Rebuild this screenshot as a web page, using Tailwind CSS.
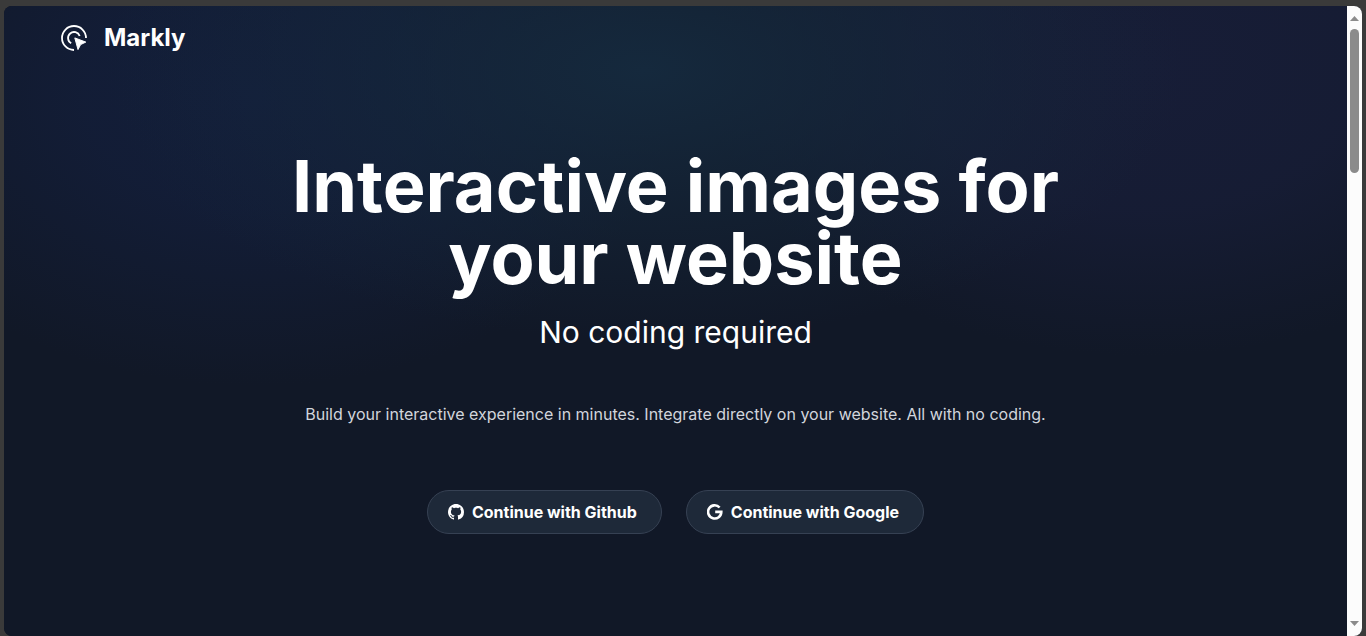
<!DOCTYPE html>
<html lang="en">
<head>
<meta charset="utf-8">
<meta name="viewport" content="width=device-width, initial-scale=1">
<title>Markly</title>
<script src="https://cdn.jsdelivr.net/npm/@tailwindcss/browser@4"></script>
</head>
<body class="min-h-screen bg-[#3a3a3a] px-1 pt-1.5 flex flex-col font-['Inter',sans-serif] text-white">
<div class="flex grow overflow-hidden rounded-lg bg-gray-900">
  <div class="flex grow flex-col bg-[#111827] bg-[radial-gradient(ellipse_540px_270px_at_640px_64px,#15293d_0%,#15293d99_40%,#15293d00_100%),radial-gradient(ellipse_440px_290px_at_1140px_60px,#171d37_0%,#171d37cc_50%,#171d3700_100%),radial-gradient(ellipse_420px_290px_at_250px_90px,#131e3a_0%,#131e3acc_40%,#131e3a00_100%)]">
    <header class="px-14 py-3">
      <a href="#" class="inline-flex items-center gap-4 text-2xl leading-10 font-bold">
        <svg class="size-7" viewBox="0 0 28 28" fill="none" stroke="currentColor" stroke-width="1.8" aria-hidden="true">
          <path d="M14 26A12 12 0 1 1 26 14"/>
          <path d="M11.2 19.3A6 6 0 1 1 19.7 12"/>
          <path d="M14.8 13.9L25.8 18.1L20.6 20.6L18 25.6Z" fill="currentColor" stroke-width="1" stroke-linejoin="round"/>
        </svg>
        Markly
      </a>
    </header>
    <main class="flex flex-col items-center px-6 pt-20 text-center">
      <h1 class="max-w-4xl text-7xl leading-none font-bold">Interactive images for<br>your website</h1>
      <p class="mt-4 text-3xl leading-11">No coding required</p>
      <p class="mt-12 text-base text-gray-300">Build your interactive experience in minutes. Integrate directly on your website. All with no coding.</p>
      <div class="mt-16 flex flex-wrap justify-center gap-6">
        <button type="button" class="flex h-11 items-center gap-2 rounded-full border border-gray-700 bg-gray-800 pr-6 pl-5 font-bold">
          <svg class="size-4" viewBox="0 0 16 16" fill="currentColor" aria-hidden="true"><path d="M8 0C3.58 0 0 3.58 0 8c0 3.54 2.29 6.53 5.47 7.59.4.07.55-.17.55-.38 0-.19-.01-.82-.01-1.49-2.01.37-2.53-.49-2.69-.94-.09-.23-.48-.94-.82-1.13-.28-.15-.68-.52-.01-.53.63-.01 1.08.58 1.23.82.72 1.21 1.87.87 2.33.66.07-.52.28-.87.51-1.07-1.78-.2-3.64-.89-3.64-3.95 0-.87.31-1.59.82-2.15-.08-.2-.36-1.02.08-2.12 0 0 .67-.21 2.2.82.64-.18 1.32-.27 2-.27s1.36.09 2 .27c1.53-1.04 2.2-.82 2.2-.82.44 1.1.16 1.92.08 2.12.51.56.82 1.27.82 2.15 0 3.07-1.87 3.75-3.65 3.95.29.25.54.73.54 1.48 0 1.07-.01 1.93-.01 2.2 0 .21.15.46.55.38A8.01 8.01 0 0 0 16 8c0-4.42-3.58-8-8-8z"/></svg>
          Continue with Github
        </button>
        <button type="button" class="flex h-11 items-center gap-2 rounded-full border border-gray-700 bg-gray-800 pr-6 pl-5 font-bold">
          <svg class="size-4" viewBox="0 0 16 16" fill="none" stroke="currentColor" stroke-width="2.6" aria-hidden="true"><path d="M12.6 3.5A6.6 6.6 0 1 0 14.3 7.9H8.2"/></svg>
          Continue with Google
        </button>
      </div>
    </main>
  </div>
  <div class="flex w-[15px] shrink-0 flex-col items-center bg-[#fcfcfc] pt-2.5 pb-2.5" aria-hidden="true">
    <svg class="h-[5px] w-[9px]" viewBox="0 0 9 5" fill="#8b8b8b"><path d="M4.5 0L9 5H0z"/></svg>
    <div class="mt-2 h-36 w-[9px] rounded-full bg-[#8b8b8b]"></div>
    <svg class="mt-auto h-[5px] w-[9px]" viewBox="0 0 9 5" fill="#8b8b8b"><path d="M0 0H9L4.5 5z"/></svg>
  </div>
</div>
</body>
</html>
